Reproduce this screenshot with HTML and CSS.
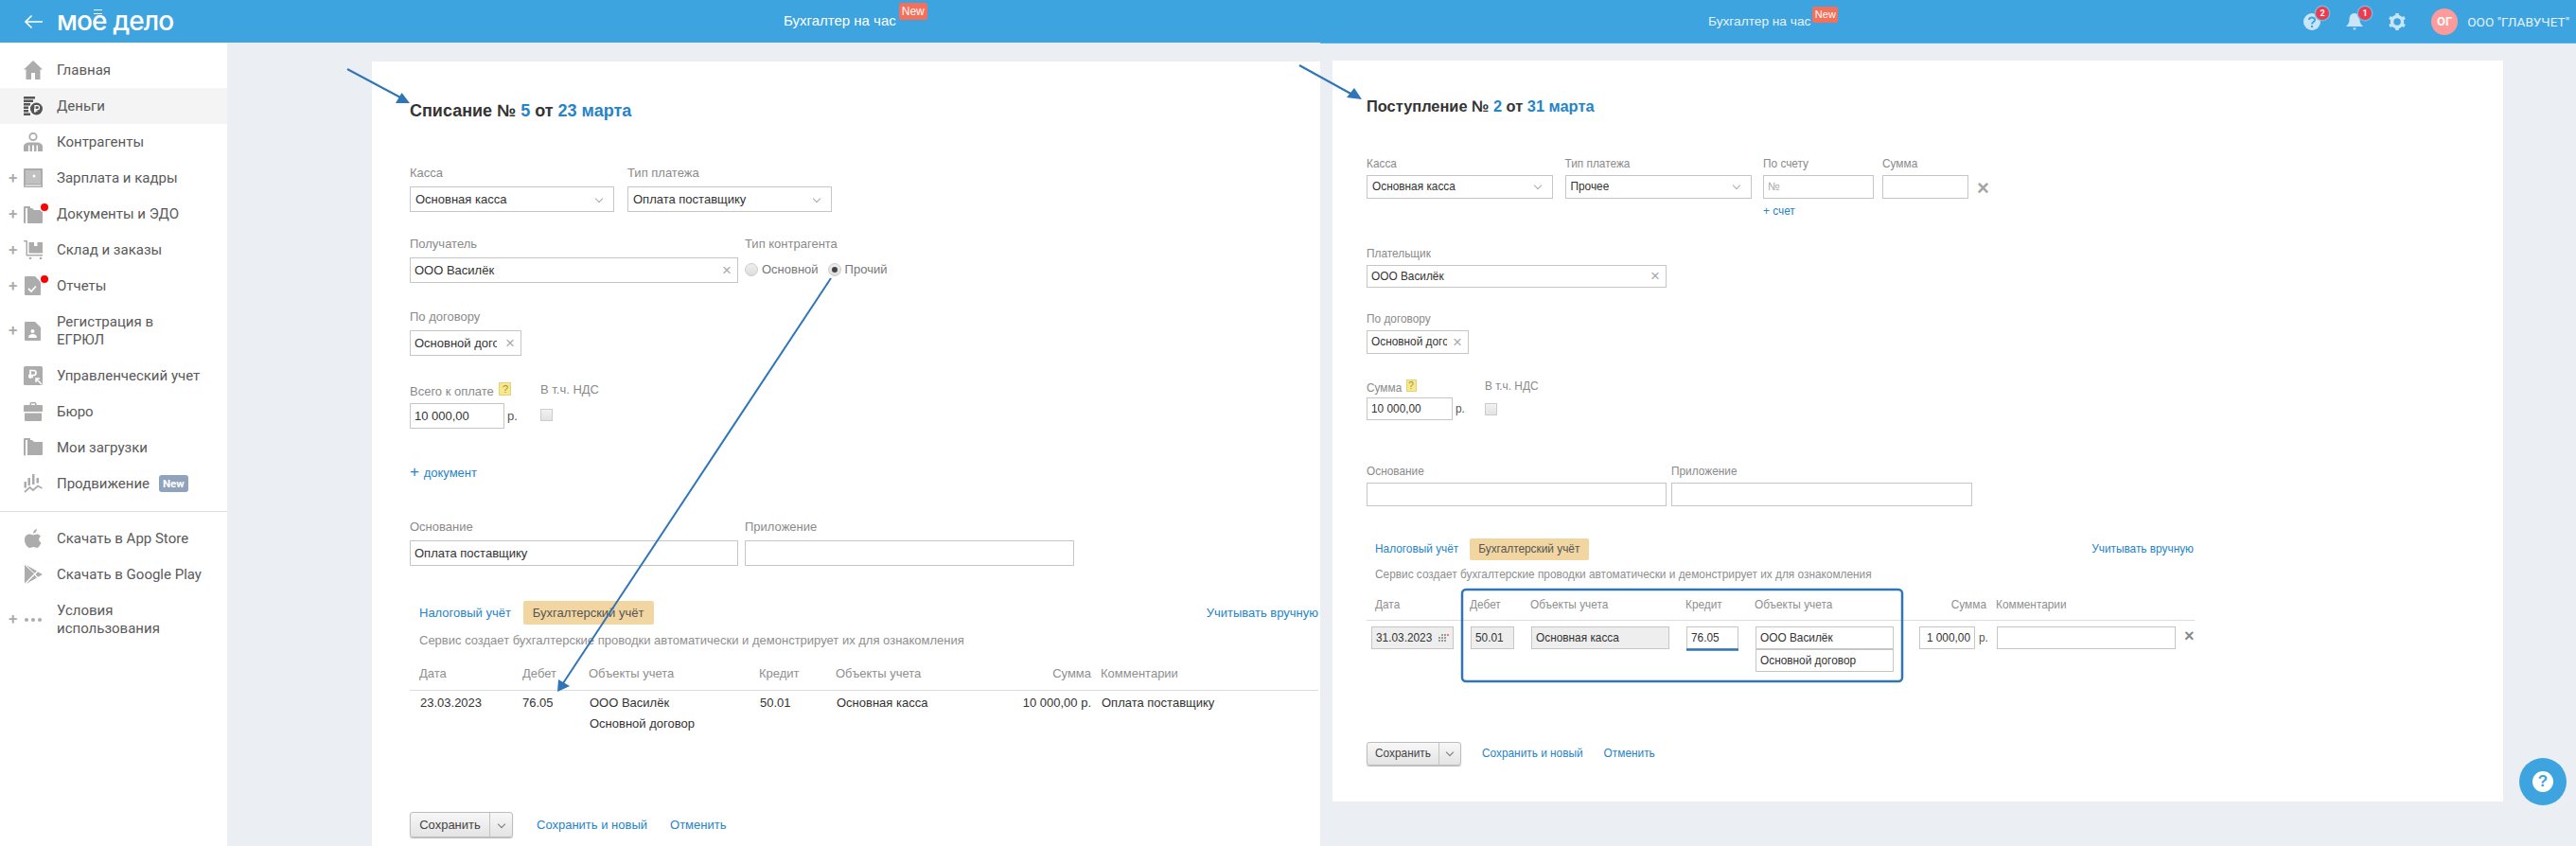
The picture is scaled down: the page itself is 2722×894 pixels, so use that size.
FILE: index.html
```html
<!DOCTYPE html>
<html lang="ru">
<head>
<meta charset="utf-8">
<title>Моё дело</title>
<link rel="stylesheet" href="styles.css">
</head>
<body>
<div class="app">
  <section class="shot shot-a">
    <header class="hdr hdr-a">
      <svg class="back" viewBox="0 0 20 16" width="20" height="16"><path d="M20 8H2M8.500 1.500L2 8l6.500 6.500" fill="none" stroke="#fff" stroke-width="1.700"/></svg>
      <div class="logo">мое дело<i class="logo-bars"></i></div>
      <div class="svc svc-a">Бухгалтер на час</div>
      <div class="new new-a">New</div>
    </header>
    <div class="shot-body">
      <nav class="side">
        <a class="nav"><span class="plus"></span><span class="ico"><svg viewBox="0 0 20 20"><path d="M10 0L20 9.500H17.500V20H12V13H8V20H2.500V9.500H0Z"/></svg></span><span>Главная</span></a>
        <a class="nav nav-on"><span class="plus"></span><span class="ico"><svg viewBox="0 0 20 20"><path fill="#555" d="M0 0H12V2.500H0ZM0 3.500H10V6H0ZM0 7H7V9.500H0ZM0 10.500H5V13H0ZM0 14H5V16.500H0ZM0 17.500H7V20H0Z"/><circle cx="13.500" cy="13" r="6.500" fill="#555"/><path d="M12 17V9.700h2.500a2 2 0 010 4H11M11 15.200h3.500" fill="none" stroke="#fff" stroke-width="1.200"/></svg></span><span>Деньги</span></a>
        <a class="nav"><span class="plus"></span><span class="ico"><svg viewBox="0 0 20 20"><circle cx="10" cy="4.500" r="3.700" fill="none" stroke="#acacac" stroke-width="1.800"/><path d="M0 20V15C0 12 3 10.500 6 10.500H14C17 10.500 20 12 20 15V20H15V13.500H13.500V20H11V13.500H9V20H6.500V13.500H5V20Z"/></svg></span><span>Контрагенты</span></a>
        <a class="nav"><span class="plus">+</span><span class="ico"><svg viewBox="0 0 20 20"><path fill-rule="evenodd" d="M1 0H20V20H1A1 1 0 010 19V1A1 1 0 011 0ZM2 2V16H18V2ZM1.500 17.500V18.500H18.500V17.500Z"/><path d="M2 2H18V16H2Z" opacity=".75"/><circle cx="11" cy="8" r="1.500" fill="#fff"/></svg></span><span>Зарплата и кадры</span></a>
        <a class="nav"><span class="plus">+</span><span class="ico"><svg viewBox="0 0 20 20"><path d="M1 2H7V4H2V18H0V3A1 1 0 011 2Z"/><path d="M4 4H9L11 6H20V19A1 1 0 0119 20H4Z"/><path d="M0 18H2V20H1A1 1 0 010 19Z"/></svg><i class="dot"></i></span><span>Документы и ЭДО</span></a>
        <a class="nav"><span class="plus">+</span><span class="ico"><svg viewBox="0 0 20 20"><path d="M0 0H4V15H20V16.500H2.500V1.500H0Z"/><path d="M5.500 2H20V13.500H5.500ZM11 2V6H14.500V2Z"/><circle cx="7" cy="19" r="1.300"/><circle cx="18" cy="19" r="1.300"/></svg></span><span>Склад и заказы</span></a>
        <a class="nav"><span class="plus">+</span><span class="ico"><svg viewBox="0 0 20 20"><path d="M2 0H12L18 6V19A1 1 0 0117 20H2A1 1 0 011 19V1A1 1 0 012 0Z"/><path d="M5 13L8 16L13 10.500" fill="none" stroke="#fff" stroke-width="1.800"/></svg><i class="dot"></i></span><span>Отчеты</span></a>
        <a class="nav nav-2"><span class="plus">+</span><span class="ico"><svg viewBox="0 0 20 20"><path d="M2 0H12L18 6V19A1 1 0 0117 20H2A1 1 0 011 19V1A1 1 0 012 0Z"/><circle cx="9.500" cy="10" r="2" fill="#fff"/><path d="M5 17C5 14 7 13 9.500 13S14 14 14 17Z" fill="#fff"/></svg></span><span>Регистрация в ЕГРЮЛ</span></a>
        <a class="nav"><span class="plus"></span><span class="ico"><svg viewBox="0 0 20 20"><rect width="20" height="20" rx="1.500"/><path d="M7 13V4.500H10.500A2.500 2.500 0 0110.500 9.500H5M5 11.300H10" fill="none" stroke="#fff" stroke-width="1.700"/><path d="M19 19L13.500 13.500M13 17V13H17" fill="none" stroke="#fff" stroke-width="1.500"/></svg></span><span>Управленческий учет</span></a>
        <a class="nav"><span class="plus"></span><span class="ico"><svg viewBox="0 0 20 20"><path d="M6.500 3V1.500A1.500 1.500 0 018 0H12A1.500 1.500 0 0113.500 1.500V3H19A1 1 0 0120 4V10H0V4A1 1 0 011 3ZM8 3H12V1.500H8ZM1 11.500H19V19A1 1 0 0118 20H2A1 1 0 011 19Z"/></svg></span><span>Бюро</span></a>
        <a class="nav"><span class="plus"></span><span class="ico"><svg viewBox="0 0 20 20"><path d="M1 0H7V2H2V18H0V1A1 1 0 011 0Z"/><path d="M4 2H9L11 4H20V17A1 1 0 0119 18H4Z"/><path d="M0 18H2V18.500H1.500Z"/></svg></span><span>Мои загрузки</span></a>
        <a class="nav"><span class="plus"></span><span class="ico"><svg viewBox="0 0 20 20"><path d="M9 0H11.500V11H9ZM4.500 4H7V12H4.500ZM0.500 8H3V14.500H0.500ZM13.500 4H16V9.500H13.500Z"/><path d="M1 19L6.500 14L10 17L15 12.500L19.500 15" fill="none" stroke="#acacac" stroke-width="1.700"/></svg></span><span>Продвижение</span><span class="tag">New</span></a>
        <hr class="rule">
        <a class="nav"><span class="plus"></span><span class="ico"><svg viewBox="0 0 20 20"><path d="M14 0C14 2.500 12 4.500 10 4.700C10 2.300 12 .3 14 0Z"/><path d="M6 5.500C8 5.500 9 6.300 10 6.300S12.500 5 14.500 5.500C16 5.800 17 6.500 18 7.800C15.500 9.300 15.500 13 18.500 14.500C17.500 17 15.500 20 14 20S12 19 10.300 19S8 20 6.500 20C4 20 1 15.500 1 11.500C1 8 3 5.500 6 5.500Z"/></svg></span><span>Скачать в App Store</span></a>
        <a class="nav"><span class="plus"></span><span class="ico"><svg viewBox="0 0 20 20"><path d="M1 0L11 9.300L1 19.500Z"/><path d="M2.500 0L14 6.500L11.500 8.800ZM2.500 20L14 13.500L11.500 10.800Z"/><path d="M15 7.300L19 9.500Q20 10 19 10.700L15 12.800L12.500 10Z"/></svg></span><span>Скачать в Google Play</span></a>
        <a class="nav nav-2"><span class="plus">+</span><span class="ico"><svg viewBox="0 0 20 20"><circle cx="3" cy="10" r="2"/><circle cx="10" cy="10" r="2"/><circle cx="17" cy="10" r="2"/></svg></span><span>Условия использования</span></a>
      </nav>
      <main class="pane pane-a">
        <article class="card card-a">
          <h1 class="title">Списание № <a>5</a> от <a>23 марта</a></h1>
          <div class="row a-r1">
            <div class="fld"><label>Касса</label><div class="ctl sel w216"><span>Основная касса</span><i class="chev"></i></div></div>
            <div class="fld"><label>Тип платежа</label><div class="ctl sel w216"><span>Оплата поставщику</span><i class="chev"></i></div></div>
          </div>
          <div class="row a-r2">
            <div class="fld"><label>Получатель</label><div class="ctl clr w347"><span>ООО Василёк</span><b class="x">×</b></div></div>
            <div class="fld"><label>Тип контрагента</label>
              <div class="radios"><i class="radio"></i><span class="rtxt">Основной</span><i class="radio radio-on"></i><span class="rtxt">Прочий</span></div>
            </div>
          </div>
          <div class="row a-r3">
            <div class="fld"><label>По договору</label><div class="ctl clr w118"><span class="cut">Основной договор</span><b class="x">×</b></div></div>
          </div>
          <div class="row a-r4">
            <div class="fld fld-sum"><label>Всего к оплате <i class="hint">?</i></label><div class="money"><div class="ctl w100">10 000,00</div><span>р.</span></div></div>
            <div class="fld"><label>В т.ч. НДС</label><i class="check"></i></div>
          </div>
          <a class="add">+ <span>документ</span></a>
          <div class="row a-r5">
            <div class="fld"><label>Основание</label><div class="ctl w347">Оплата поставщику</div></div>
            <div class="fld"><label>Приложение</label><div class="ctl w348"></div></div>
          </div>
          <div class="tabs">
            <a class="tab">Налоговый учёт</a><span class="tab tab-on">Бухгалтерский учёт</span><a class="manual">Учитывать вручную</a>
          </div>
          <p class="note">Сервис создает бухгалтерские проводки автоматически и демонстрирует их для ознакомления</p>
          <div class="ledger">
            <div class="th pl10">Дата</div><div class="th">Дебет</div><div class="th">Объекты учета</div><div class="th">Кредит</div><div class="th">Объекты учета</div><div class="th num">Сумма</div><div class="th pl10">Комментарии</div>
            <div class="td pl11">23.03.2023</div><div class="td">76.05</div><div class="td">ООО Василёк<br>Основной договор</div><div class="td">50.01</div><div class="td">Основная касса</div><div class="td num">10 000,00 р.</div><div class="td pl11">Оплата поставщику</div>
          </div>
          <div class="acts">
            <div class="btn"><span class="btn-main">Сохранить</span><span class="btn-more"><i class="chev"></i></span></div>
            <a>Сохранить и новый</a><a>Отменить</a>
          </div>
        </article>
      </main>
    </div>
  </section>

  <section class="shot shot-b">
    <header class="hdr hdr-b">
      <div class="svc svc-b">Бухгалтер на час</div>
      <div class="new new-b">New</div>
      <div class="tools">
        <span class="tool"><svg viewBox="0 0 18 18"><circle cx="9" cy="9" r="9" fill="#c9e5f7"/><path d="M6 7C6 3.500 12 3.500 12 7C12 9.500 9 9 9 11.500" fill="none" stroke="#3da4e0" stroke-width="2"/><circle cx="9" cy="14" r="1.200" fill="#3da4e0"/></svg><i class="cnt">2</i></span>
        <span class="tool"><svg viewBox="0 0 18 18"><path d="M9 0C13 0 14.500 3 14.500 7C14.500 10 16 12 18 14H0C2 12 3.500 10 3.500 7C3.500 3 5 0 9 0Z" fill="#c9e5f7"/><path d="M7 15.500H11L9 18Z" fill="#c9e5f7"/></svg><i class="cnt">1</i></span>
        <span class="tool"><svg viewBox="0 0 18 18"><circle cx="9" cy="9" r="5.500" fill="none" stroke="#c9e5f7" stroke-width="3.500"/><path d="M9 9L9 0M9 9L17 4.500M9 9L17 13.500M9 9L9 18M9 9L1 13.500M9 9L1 4.500" stroke="#c9e5f7" stroke-width="3.500" stroke-dasharray="0 6.500 3 9"/></svg></span>
        <span class="avatar">ОГ</span>
        <span class="org">ООО "ГЛАВУЧЕТ"</span>
      </div>
    </header>
    <main class="pane pane-b">
      <article class="card card-b">
        <h1 class="title">Поступление № <a>2</a> от <a>31 марта</a></h1>
        <div class="row b-r1">
          <div class="fld"><label>Касса</label><div class="ctl sel w197"><span>Основная касса</span><i class="chev"></i></div></div>
          <div class="fld"><label>Тип платежа</label><div class="ctl sel w197"><span>Прочее</span><i class="chev"></i></div></div>
          <div class="fld"><label>По счету</label><div class="ctl w117 ph">№</div><a class="more">+ счет</a></div>
          <div class="fld fld-amt"><label>Сумма</label><div class="ctl w91"></div></div>
          <b class="x x-box">×</b>
        </div>
        <div class="row b-r2">
          <div class="fld"><label>Плательщик</label><div class="ctl clr w317"><span>ООО Василёк</span><b class="x">×</b></div></div>
        </div>
        <div class="row b-r3">
          <div class="fld"><label>По договору</label><div class="ctl clr w108"><span class="cut">Основной договор</span><b class="x">×</b></div></div>
        </div>
        <div class="row b-r4">
          <div class="fld fld-sum"><label>Сумма <i class="hint">?</i></label><div class="money"><div class="ctl w91">10 000,00</div><span>р.</span></div></div>
          <div class="fld"><label>В т.ч. НДС</label><i class="check"></i></div>
        </div>
        <div class="row b-r5">
          <div class="fld"><label>Основание</label><div class="ctl w317"></div></div>
          <div class="fld"><label>Приложение</label><div class="ctl w318"></div></div>
        </div>
        <div class="tabs">
          <a class="tab">Налоговый учёт</a><span class="tab tab-on">Бухгалтерский учёт</span><a class="manual">Учитывать вручную</a>
        </div>
        <p class="note">Сервис создает бухгалтерские проводки автоматически и демонстрирует их для ознакомления</p>
        <div class="ledger">
          <div class="th pl9">Дата</div><div class="th">Дебет</div><div class="th">Объекты учета</div><div class="th">Кредит</div><div class="th">Объекты учета</div><div class="th num">Сумма</div><div class="th pl4">Комментарии</div>
          <div class="td"><div class="ctl off date">31.03.2023<svg class="cal" viewBox="0 0 12 10" width="12" height="10"><path d="M1 4h2v2H1zM4 4h2v2H4zM7 4h2v2H7zM1 7h2v2H1zM4 7h2v2H4zM7 7h2v2H7zM4 1h2v2H4zM7 1h2v2H7z" fill="#999"/><path d="M10 1h2v2h-2z" fill="#e77"/></svg></div></div>
          <div class="td"><div class="ctl off w46">50.01</div></div>
          <div class="td"><div class="ctl off w146">Основная касса</div></div>
          <div class="td"><div class="ctl w55">76.05</div></div>
          <div class="td"><div class="ctl w146 stack">ООО Василёк</div><div class="ctl w146 stack">Основной договор</div></div>
          <div class="td sumcell"><div class="ctl w59 right">1 000,00</div><span>р.</span></div>
          <div class="td cmtcell"><div class="ctl w189"></div><b class="del">×</b></div>
        </div>
        <div class="acts">
          <div class="btn"><span class="btn-main">Сохранить</span><span class="btn-more"><i class="chev"></i></span></div>
          <a>Сохранить и новый</a><a>Отменить</a>
        </div>
      </article>
    </main>
  </section>
</div>

<svg class="marks" viewBox="0 0 2722 894" width="2722" height="894">
  <g stroke="#2f75b8" fill="none">
    <path d="M367 73L425 104" stroke-width="2"/>
    <path d="M1373 69L1431 101" stroke-width="2"/>
    <path d="M878 294L595 722" stroke-width="2"/>
    <rect x="1545" y="623" width="465" height="97" rx="4" stroke-width="2.500"/>
    <path d="M1782 686.500H1837" stroke-width="2.500"/>
  </g>
  <g fill="#2f75b8">
    <path d="M433 109L418 109L424.500 98Z"/>
    <path d="M1439 105L1423 103L1431 93Z"/>
    <path d="M589 731L590 718L602 725Z"/>
  </g>
</svg>

<a class="help"><span>?</span></a>
</body>
</html>
```

FILE: styles.css
```css
* { box-sizing: border-box; }
html, body { margin: 0; height: 894px; overflow: hidden; }
body { position: relative; background: #ebeff3; font-family: "Liberation Sans", Arial, sans-serif; color: #333; }
a { color: #2584c9; text-decoration: none; }
i, b { font-style: normal; }

.app { display: flex; height: 894px; }
.shot { display: flex; flex-direction: column; }
.shot-a { width: 1395px; flex: none; }
.shot-b { flex: 1; min-width: 0; }
.shot-body { display: flex; flex: 1; min-height: 0; }

/* header */
.hdr { display: flex; align-items: center; background: #3da4e0; color: #fff; flex: none; }
.hdr-a { height: 45px; padding-left: 25px; }
.hdr-b { height: 46px; padding-left: 410px; padding-right: 7px; border-bottom: 1px solid #5ab2e9; }
.back { flex: none; margin-right: 15px; }
.logo { position: relative; font-family: Inter, sans-serif; font-size: 28px; font-weight: 500; letter-spacing: -0.9px; line-height: 36px; width: 122px; white-space: nowrap; margin-top: -2px; }
.logo-bars { position: absolute; left: 39px; top: 6px; width: 9px; height: 5px; border-top: 1.500px solid #fff; border-bottom: 1.500px solid #fff; }
.svc { white-space: nowrap; }
.svc-a { font-size: 15px; margin-left: 646px; margin-top: -3px; }
.svc-b { font-size: 13.700px; color: #e6f3fb; margin-top: 0; }
.new { background: #f5705a; border-radius: 2px; color: #fff; align-self: flex-start; text-align: center; white-space: nowrap; }
.new-a { font-size: 12px; line-height: 18px; width: 30px; height: 18px; margin: 3px 0 0 3px; }
.new-b { font-size: 11px; line-height: 17px; width: 27px; height: 17px; margin: 7px 0 0 2px; }
.tools { margin-left: auto; display: flex; align-items: center; }
.tool { position: relative; width: 18px; height: 18px; margin-right: 27px; }
.tool svg { display: block; width: 18px; height: 18px; }
.cnt { position: absolute; left: 6px; top: -14px; width: 14px; height: 14px; margin: 7px 0 0 7px; border-radius: 50%; background: #ee3a4d; box-shadow: 0 0 0 1.500px #6fb8e6; color: #fff; font: 700 9px/14px Roboto, sans-serif; text-align: center; }
.avatar { width: 28px; height: 28px; border-radius: 50%; background: #ff9a9a; color: #fff; font: 700 13px/28px Roboto, sans-serif; text-align: center; margin-right: 10px; }
.org { font: 13.600px Roboto, sans-serif; color: #e6f3fb; white-space: nowrap; }

/* sidebar */
.side { width: 240px; flex: none; background: #fff; padding-top: 10px; font: 15px/19px Roboto, sans-serif; color: #5a5a5a; }
.nav { display: flex; align-items: center; height: 38px; color: #5a5a5a; }
.nav-on { background: #f4f4f4; }
.nav-2 { height: 57px; }
.nav-2 > span:last-child { width: 150px; }
.plus { width: 25px; flex: none; padding-left: 9px; color: #aaa; font-size: 17px; font-weight: 500; }
.ico { position: relative; width: 20px; height: 20px; flex: none; margin-right: 15px; }
.ico svg { display: block; width: 20px; height: 20px; fill: #acacac; }
.dot { position: absolute; left: 18px; top: -1px; width: 8px; height: 8px; border-radius: 50%; background: #f00; box-shadow: 0 0 0 1.500px #fff; }
.tag { margin-left: 10px; background: #8fa3bd; color: #fff; border-radius: 3px; font: 700 11.500px/18px Roboto, sans-serif; padding: 0 4px; height: 18px; }
.rule { height: 1px; border: 0; margin: 10px 0 9px; background: #ddd; }

/* panes */
.pane { flex: 1; min-height: 0; min-width: 0; }
.pane-a { padding: 20px 0 0 153px; }
.pane-b { padding: 18px 0 0 13px; }
.card { background: #fff; }
.card-a { width: 1002px; height: 829px; padding: 40px 2px 0 40px; font-size: 13px; }
.card-b { width: 1237px; height: 783px; padding: 37px 0 0 36px; font-size: 11.850px; }

.title { margin: 0; font-weight: 700; color: #333; }
.card-a .title { font-size: 18px; line-height: 24px; }
.card-b .title { font-size: 16.400px; line-height: 22px; }

.row { display: flex; }
.fld { display: flex; flex-direction: column; }
.fld label { color: #8a8a8a; white-space: nowrap; }
.card-a .fld label { line-height: 16px; margin-bottom: 6px; height: 16px; }
.card-b .fld label { line-height: 14px; margin-bottom: 5px; height: 14px; }

.ctl { display: flex; align-items: center; border: 1px solid #c6c6c6; background: #fff; padding: 0 4px; white-space: nowrap; color: #333; flex: none; }
.card-a .ctl { height: 27px; }
.card-b .ctl { height: 24.500px; }
.sel { justify-content: space-between; padding: 0 12px 0 5px; }
.clr { justify-content: space-between; padding-right: 6px; }
.chev { display: block; width: 6px; height: 6px; border-right: 1px solid #aaa; border-bottom: 1px solid #aaa; transform: rotate(45deg); margin-top: -2px; }
.x { color: #aaa; font-size: 17px; line-height: 1; font-weight: 400; }
.cut { overflow: hidden; }
.card-a .cut { width: 87px; }
.card-b .cut { width: 80px; }
.ph { color: #aaa; }
.right { justify-content: flex-end; }
.off { background: #eee; }

.w46 { width: 46px; } .w55 { width: 55px; } .w59 { width: 59px; } .w91 { width: 91px; }
.w100 { width: 100px; } .w108 { width: 108px; } .w117 { width: 117px; } .w118 { width: 118px; }
.w146 { width: 146px; } .w189 { width: 189px; } .w197 { width: 197px; } .w216 { width: 216px; }
.w317 { width: 317px; } .w318 { width: 318px; } .w347 { width: 347px; } .w348 { width: 348px; }

/* form rows card A */
.a-r1 { margin-top: 46px; gap: 14px; }
.a-r2 { margin-top: 26px; gap: 7px; }
.a-r3 { margin-top: 28px; }
.a-r4 { margin-top: 28px; }
.a-r5 { margin-top: 42px; gap: 7px; }
.card-a .fld-sum { width: 138px; }
.card-b .fld-sum { width: 125px; }
.money { display: flex; align-items: center; gap: 3px; color: #555; }
.hint { display: inline-block; vertical-align: 3px; text-align: center; background: #f5e88f; border: 1px solid #e2d27a; color: #a8912a; }
.card-a .hint { width: 13px; height: 14px; font-size: 11px; line-height: 12px; margin-left: 2px; }
.card-b .hint { width: 11px; height: 13px; font-size: 10px; line-height: 11px; margin-left: 1px; }
.check { display: block; width: 13px; height: 13px; border: 1px solid #ccc; background: linear-gradient(#f2f2f2, #e2e2e2); margin: 6px 0 0; }
.radios { display: flex; align-items: center; height: 27px; margin-top: -1px; color: #777; }
.radio { width: 14px; height: 14px; border-radius: 50%; border: 1px solid #ccc; background: linear-gradient(#eee, #ddd); margin-right: 4px; display: flex; align-items: center; justify-content: center; }
.radio-on::before { content: ""; width: 6px; height: 6px; border-radius: 50%; background: #444; }
.rtxt { margin-right: 10px; }
.add { display: block; margin-top: 38px; line-height: 16px; height: 16px; font-size: 17px; }
.add span { font-size: 13px; }

/* form rows card B */
.b-r1 { margin-top: 43px; }
.b-r1 .fld { margin-right: 12.500px; }
.b-r1 .fld-amt { margin-right: 9px; }
.b-r1 .fld:nth-child(3) { margin-right: 9px; }
.x-box { margin-top: 22px; color: #a5a5a5; font-size: 22px; font-weight: 700; height: 20px; }
.more { margin-top: 6px; line-height: 14px; height: 14px; }
.b-r2 { margin-top: 31px; }
.b-r3 { margin-top: 26px; }
.b-r4 { margin-top: 27px; }
.b-r5 { margin-top: 47px; gap: 5px; }

/* tabs */
.tabs { display: flex; align-items: center; color: #555; white-space: nowrap; }
.tab-on { background: #f2d6a2; border-radius: 2px; color: #555; }
.manual { margin-left: auto; }
.card-a .tabs { margin-top: 37px; height: 25px; padding-left: 10px; }
.card-a .tab-on { margin-left: 13px; padding: 0 10px; line-height: 25px; width: 138px; }
.card-b .tabs { margin-top: 34px; height: 23px; padding-left: 9px; width: 875px; }
.card-b .tab-on { margin-left: 12px; padding: 0 9px; line-height: 23px; width: 126px; }
.card-b .manual { margin-right: 1px; }
.note { margin: 0; color: #8f8f8f; white-space: nowrap; }
.card-a .note { margin-top: 9px; line-height: 16px; padding-left: 10px; }
.card-b .note { margin-top: 8px; line-height: 14px; padding-left: 9px; }

/* ledger */
.ledger { display: grid; }
.th { color: #8f8f8f; border-bottom: 1px solid #ddd; white-space: nowrap; padding-bottom: 9px; }
.td { white-space: nowrap; }
.num { text-align: right; }
.pl4 { padding-left: 4px; } .pl9 { padding-left: 9px; } .pl10 { padding-left: 10px; } .pl11 { padding-left: 11px; }
.card-a .ledger { grid-template-columns: 119px 70px 180px 81px 127px 143px 240px; margin-top: 19px; width: 960px; }
.card-a .th { line-height: 16px; }
.card-a .td { padding-top: 2px; line-height: 22px; }
.card-a .td:nth-child(10) { padding-left: 1px; }
.card-a .td:nth-child(11) { padding-left: 1px; }
.card-a .td:nth-child(12) { padding-left: 1px; }
.card-b .ledger { grid-template-columns: 109px 64px 164px 73px 158px 93px 214px; margin-top: 18px; width: 875px; }
.card-b .th { line-height: 14px; }
.card-b .th.num { padding-right: 6px; }
.card-b .td { padding-top: 6px; }
.card-b .td > .ctl { margin-left: 1px; }
.card-b .td > .date { width: 87px; margin-left: 5px; justify-content: space-between; }
.cal { flex: none; }
.card-b .stack { height: 24px; margin-left: 1px; }
.sumcell { display: flex; align-items: flex-start; color: #555; }
.card-b .sumcell > .ctl { margin-left: 16px; }
.sumcell span { margin: 5px 0 0 4px; }
.cmtcell { display: flex; align-items: flex-start; }
.card-b .cmtcell > .ctl { margin-left: 5px; }
.del { color: #888; font-size: 18px; line-height: 20px; margin-left: 9px; }

/* actions */
.acts { display: flex; align-items: center; }
.acts a { white-space: nowrap; }
.btn { display: flex; border: 1px solid #bdbdbd; border-radius: 3px; background: linear-gradient(#f7f7f7, #e4e4e4); box-shadow: 0 1px 1px #bbb; color: #444; flex: none; }
.btn-main { display: flex; align-items: center; justify-content: center; border-right: 1px solid #c4c4c4; }
.btn-more { display: flex; align-items: center; justify-content: center; flex: 1; }
.btn-more .chev { border-color: #777; }
.card-a .acts { margin-top: 82px; }
.card-a .btn { width: 109px; height: 27px; }
.card-a .btn-main { width: 84px; }
.card-a .acts a:nth-child(2) { margin-left: 25px; }
.card-a .acts a:nth-child(3) { margin-left: 24px; }
.card-b .acts { margin-top: 74px; }
.card-b .btn { width: 100px; height: 25px; }
.card-b .btn-main { width: 76px; }
.card-b .acts a:nth-child(2) { margin-left: 22px; }
.card-b .acts a:nth-child(3) { margin-left: 22px; }

/* overlays */
.marks { position: absolute; left: 0; top: 0; pointer-events: none; }
.help { position: absolute; left: 2662px; top: 801px; width: 50px; height: 50px; border-radius: 50%; background: #3da4e0; display: flex; align-items: center; justify-content: center; }
.help span { width: 22px; height: 22px; border-radius: 50%; background: #fff; color: #3da4e0; font: 700 17px/22px "Liberation Sans", sans-serif; text-align: center; }
```
